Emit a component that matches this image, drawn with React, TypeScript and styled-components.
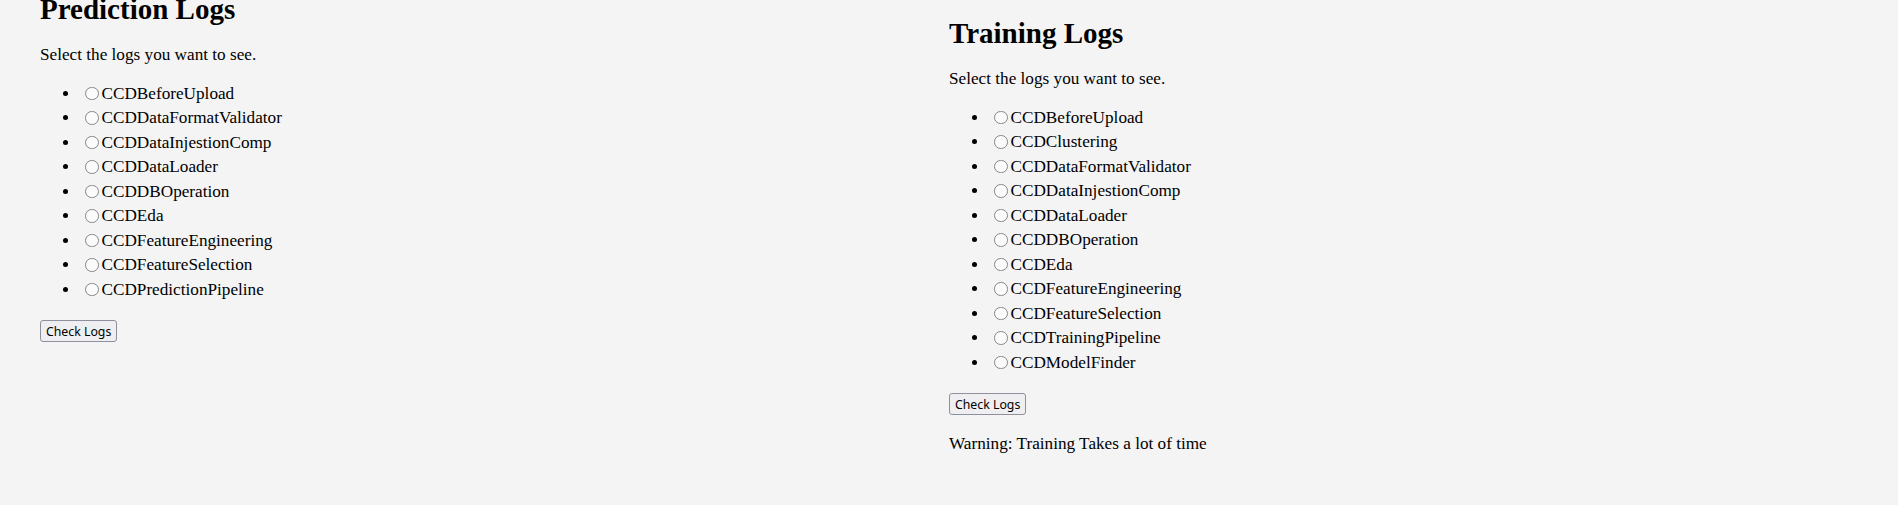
import React from "react";
import styled, { createGlobalStyle } from "styled-components";

const GlobalStyle = createGlobalStyle`
  html, body {
    margin: 0;
    padding: 0;
    background: #f4f4f4;
  }
  body {
    font-family: "Liberation Serif", "Times New Roman", serif;
    color: #000;
  }
`;

const Page = styled.main`
  display: grid;
  grid-template-columns: 1fr 1fr;
  align-items: start;
  padding: 0 40px;
`;

const Section = styled.section<{ $offset: number }>`
  display: flex;
  flex-direction: column;
  align-items: flex-start;
  margin-top: ${(p) => p.$offset}px;
`;

const Title = styled.h2`
  margin: 0 0 18.5px;
  font-size: 29px;
  line-height: 33px;
  font-weight: bold;
`;

const Text = styled.p`
  margin: 0 0 17px;
  font-size: 17.2px;
  line-height: 20px;
`;

const LogList = styled.ul`
  margin: 0 0 18px;
  padding-left: 40px;
  list-style: disc;
  font-size: 17.2px;
  align-self: stretch;
`;

const LogItem = styled.li`
  line-height: 24.5px;
`;

const Radio = styled.input`
  appearance: none;
  -webkit-appearance: none;
  box-sizing: border-box;
  display: inline-block;
  width: 13.5px;
  height: 13.5px;
  margin: 0 3px 0 5px;
  vertical-align: -1.5px;
  border: 1.8px solid #878787;
  border-radius: 50%;
  background: #fbfbfb;
`;

const CheckButton = styled.button`
  box-sizing: border-box;
  height: 22px;
  margin: 0 0 19px;
  padding: 0 5px;
  font-family: "Noto Sans", "DejaVu Sans", sans-serif;
  font-size: 12.3px;
  color: #000;
  background: #efeff1;
  border: 1px solid #8f8f9d;
  border-radius: 3px;
`;

const predictionLogs = [
  "CCDBeforeUpload",
  "CCDDataFormatValidator",
  "CCDDataInjestionComp",
  "CCDDataLoader",
  "CCDDBOperation",
  "CCDEda",
  "CCDFeatureEngineering",
  "CCDFeatureSelection",
  "CCDPredictionPipeline",
];

const trainingLogs = [
  "CCDBeforeUpload",
  "CCDClustering",
  "CCDDataFormatValidator",
  "CCDDataInjestionComp",
  "CCDDataLoader",
  "CCDDBOperation",
  "CCDEda",
  "CCDFeatureEngineering",
  "CCDFeatureSelection",
  "CCDTrainingPipeline",
  "CCDModelFinder",
];

function LogPanel({
  title,
  name,
  logs,
  offset,
  warning,
}: {
  title: string;
  name: string;
  logs: string[];
  offset: number;
  warning?: string;
}) {
  return (
    <Section $offset={offset}>
      <Title>{title}</Title>
      <Text>Select the logs you want to see.</Text>
      <LogList>
        {logs.map((log) => (
          <LogItem key={log}>
            <label>
              <Radio type="radio" name={name} value={log} />
              {log}
            </label>
          </LogItem>
        ))}
      </LogList>
      <CheckButton type="button">Check Logs</CheckButton>
      {warning && <Text>{warning}</Text>}
    </Section>
  );
}

export default function App() {
  return (
    <>
      <GlobalStyle />
      <Page>
        <LogPanel title="Prediction Logs" name="prediction" logs={predictionLogs} offset={-7} />
        <LogPanel
          title="Training Logs"
          name="training"
          logs={trainingLogs}
          offset={17}
          warning="Warning: Training Takes a lot of time"
        />
      </Page>
    </>
  );
}
